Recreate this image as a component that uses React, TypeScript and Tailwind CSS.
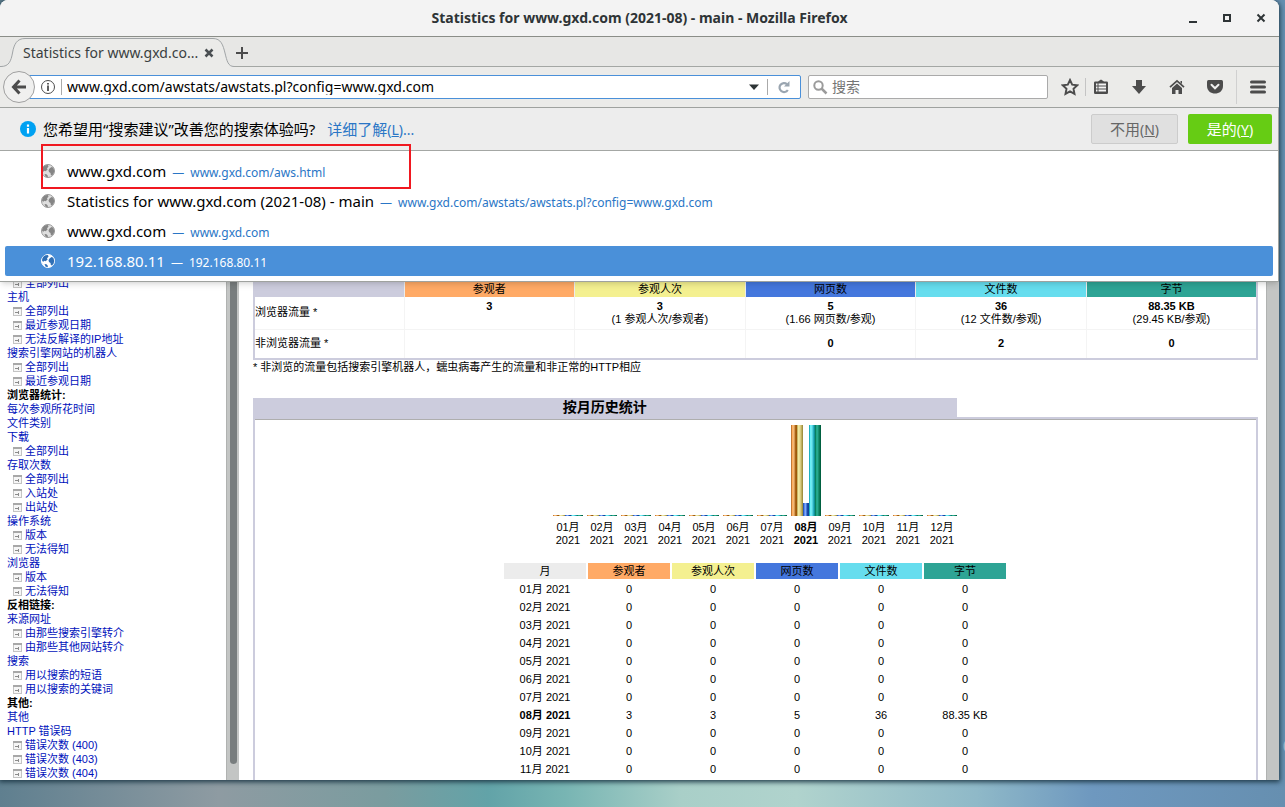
import { useState } from 'react';

const uiFont = "font-['Noto_Sans','Noto_Sans_CJK_SC',sans-serif]";
const pageFont = "font-['Liberation_Sans','Noto_Sans_CJK_SC',sans-serif]";

type NavItem = { label: string; kind: 'title' | 'link' | 'sub' };

const sub = (label: string): NavItem => ({ label, kind: 'sub' });
const link = (label: string): NavItem => ({ label, kind: 'link' });
const title = (label: string): NavItem => ({ label, kind: 'title' });

const navItems: NavItem[] = [
  sub('全部列出'),
  link('主机'),
  sub('全部列出'),
  sub('最近参观日期'),
  sub('无法反解译的IP地址'),
  link('搜索引擎网站的机器人'),
  sub('全部列出'),
  sub('最近参观日期'),
  title('浏览器统计:'),
  link('每次参观所花时间'),
  link('文件类别'),
  link('下载'),
  sub('全部列出'),
  link('存取次数'),
  sub('全部列出'),
  sub('入站处'),
  sub('出站处'),
  link('操作系统'),
  sub('版本'),
  sub('无法得知'),
  link('浏览器'),
  sub('版本'),
  sub('无法得知'),
  title('反相链接:'),
  link('来源网址'),
  sub('由那些搜索引擎转介'),
  sub('由那些其他网站转介'),
  link('搜索'),
  sub('用以搜索的短语'),
  sub('用以搜索的关键词'),
  title('其他:'),
  link('其他'),
  link('HTTP 错误码'),
  sub('错误次数 (400)'),
  sub('错误次数 (403)'),
  sub('错误次数 (404)'),
];

const suggestions = [
  { title: 'www.gxd.com', url: 'www.gxd.com/aws.html' },
  { title: 'Statistics for www.gxd.com (2021-08) - main', url: 'www.gxd.com/awstats/awstats.pl?config=www.gxd.com' },
  { title: 'www.gxd.com', url: 'www.gxd.com' },
  { title: '192.168.80.11', url: '192.168.80.11' },
];

const columns = [
  { label: '参观者', bg: 'bg-[#ffaa66]' },
  { label: '参观人次', bg: 'bg-[#f4f090]' },
  { label: '网页数', bg: 'bg-[#4477dd]' },
  { label: '文件数', bg: 'bg-[#66ddee]' },
  { label: '字节', bg: 'bg-[#2ea495]' },
];

const viewed = [
  ['3', ''],
  ['3', '(1 参观人次/参观者)'],
  ['5', '(1.66 网页数/参观)'],
  ['36', '(12 文件数/参观)'],
  ['88.35 KB', '(29.45 KB/参观)'],
];
const notViewed = ['', '', '0', '2', '0'];

const months = ['01月', '02月', '03月', '04月', '05月', '06月', '07月', '08月', '09月', '10月', '11月', '12月'];
const current = '08月';

// one colour per pixel column, left to right
const barShades = [
  ['#c47a34', '#ffb060', '#f0b878', '#d89850', '#a86418', '#a05808'],
  ['#c8b868', '#f0e8a0', '#e8e098', '#d8cc80', '#c0b060', '#a09040'],
  ['#2858b8', '#5888f0', '#80a8f8', '#4878d8', '#1848a8', '#104098'],
  ['#20b0c0', '#68f0f8', '#70e8f0', '#50d0e0', '#28b0c0', '#109098'],
  ['#088060', '#20a888', '#28a890', '#189070', '#087858', '#006040'],
];
const fullHeights = [91, 91, 13, 91, 91];

function MonthBars({ active }: { active: boolean }) {
  return (
    <svg width="30" height="91" shapeRendering="crispEdges" className="mx-auto block">
      {barShades.map((shades, bar) => {
        const h = active ? fullHeights[bar] : 1;
        return shades.map((color, i) => (
          <rect key={`${bar}-${i}`} x={bar * 6 + i} y={91 - h} width="1" height={h} fill={color} />
        ));
      })}
    </svg>
  );
}

function Globe({ selected }: { selected: boolean }) {
  const land = selected ? '#2f6fb5' : '#858585';
  return (
    <svg width="16" height="16" viewBox="0 0 16 16" className="shrink-0">
      <circle cx="8" cy="8" r="6.500" fill={selected ? '#ffffff' : '#dedede'} stroke={selected ? '#ffffff' : '#9a9a9a'} />
      <path
        d="M2 7.500C2 5 3.500 3 5.500 2.200L8 2l.5 1.800L7 5.200l.6 1.300-2 1.700L4 7.800 3.200 9zM9.500 5.500l2-1.500 1.800.8L14.300 8l-.8 2.800-1.500 1.700-1.200-.5-.3-2L9 9l-.5-1.800zM4.500 11l2 .3L8 13l-.5 1.200-2-.6z"
        fill={land}
      />
    </svg>
  );
}

function NavIcon() {
  return (
    <svg width="9" height="9" viewBox="0 0 9 9" shapeRendering="crispEdges" className="mr-[3px] ml-[6px] shrink-0">
      <path d="M.5 1v7.500h8V1" fill="#f6f6f6" stroke="#c4c4c4" />
      <path d="M0 1h9" stroke="#a8a8a8" strokeWidth="2" />
      <path d="M2 5.500h4M5.500 4v3" stroke="#8c8c8c" fill="none" />
    </svg>
  );
}

function TitleBar() {
  return (
    <header className="flex h-[37px] shrink-0 items-center border-b border-[#8b8e88] bg-[#f3f3f3]">
      <div className="w-[100px]" />
      <h1 className="flex-1 text-center text-sm font-bold text-[#2e3436]">
        Statistics for www.gxd.com (2021-08) - main - Mozilla Firefox
      </h1>
      <div className="flex w-[100px] items-center justify-end gap-[18px] pr-[10px] text-[#2e3436]">
        <button aria-label="Minimize" className="size-4">
          <svg width="16" height="16" className="block"><path d="M4 11h8v2H4z" fill="currentColor" /></svg>
        </button>
        <button aria-label="Maximize" className="size-4">
          <svg width="16" height="16" className="block"><path d="M5 5h6v6H5z" fill="none" stroke="currentColor" strokeWidth="2" /></svg>
        </button>
        <button aria-label="Close" className="size-4">
          <svg width="16" height="16" className="block"><path d="m4.500 4.500 7 7m0-7-7 7" stroke="currentColor" strokeWidth="2" /></svg>
        </button>
      </div>
    </header>
  );
}

function TabBar() {
  return (
    <div className="flex h-[30px] shrink-0 bg-[#e7e7e5]">
      <div className="grid w-[234px]">
        <svg width="234" height="30" className="col-start-1 row-start-1">
          <path
            d="M0 29.500h1C9 29.500 11 24 12.500 16 14 7 17 1.500 25 1.500h188C221 1.500 223 8 225 16s3 13.500 9 13.500V30H0z"
            fill="#ebebe9"
          />
          <path
            d="M0 29.500h1C9 29.500 11 24 12.500 16 14 7 17 1.500 25 1.500h188C221 1.500 223 8 225 16s3 13.500 9 13.500"
            fill="none"
            stroke="#a0a4a6"
          />
        </svg>
        <div className="col-start-1 row-start-1 flex items-center justify-between pr-[20px] pl-[23px] pt-[2px]">
          <span className="text-sm text-[#3a3f41]">Statistics for www.gxd.co...</span>
          <button aria-label="Close tab">
            <svg width="10" height="10" className="block"><path d="m1.500 1.500 7 7m0-7-7 7" stroke="#4a4f52" strokeWidth="2.500" /></svg>
          </button>
        </div>
      </div>
      <div className="flex flex-1 items-center border-b border-[#a4a7a4] pt-[2px]">
        <button aria-label="New tab">
          <svg width="16" height="16" className="block"><path d="M8 2v12M2 8h12" stroke="#4c4c4c" strokeWidth="2" /></svg>
        </button>
      </div>
    </div>
  );
}

function ToolBar() {
  const [address, setAddress] = useState('www.gxd.com/awstats/awstats.pl?config=www.gxd.com');
  const [query, setQuery] = useState('');

  return (
    <div className="flex h-[41px] shrink-0 items-center border-b border-[#a0a3a0] bg-[#ebebe9] pl-[3px]">
      <button aria-label="Back" className="z-10 flex size-8 shrink-0 items-center justify-center rounded-full border border-[#a0a0a0] bg-[#f0f0ef]">
        <svg width="16" height="16" viewBox="0 0 16 16">
          <path d="M8.500 1.500 2.500 8l6 6.500M3 8h12" fill="none" stroke="#4c4c4c" strokeWidth="3" />
        </svg>
      </button>
      <div className="-ml-[6px] flex h-6 flex-1 items-center rounded-r-xs border border-[#4a90d9] bg-white pl-[10px]">
        <svg width="16" height="16" viewBox="0 0 16 16" className="shrink-0">
          <circle cx="8" cy="8" r="6.500" fill="none" stroke="#4c4c4c" />
          <path d="M7.100 6.500h1.800V12H7.100zM7.100 4h1.800v1.600H7.100z" fill="#4c4c4c" />
        </svg>
        <input
          aria-label="Address"
          value={address}
          onChange={(e) => setAddress(e.target.value)}
          className="ml-[5px] h-4 min-w-0 flex-1 border-l border-[#aaaaaa] pl-[5px] text-sm text-black outline-none"
        />
        <button aria-label="Show history" className="px-[8px]">
          <svg width="10" height="6" className="block"><path d="M0 .5h10L5 6z" fill="#2e3436" /></svg>
        </button>
        <button aria-label="Reload" className="border-l border-[#aaaaaa] px-[9px]">
          <svg width="14" height="16" viewBox="0 0 14 16" className="block">
            <path d="M10 5.200A4.500 4.500 0 1 0 10.800 11" fill="none" stroke="#9aa5b0" strokeWidth="2.200" />
            <path d="M12.500 2v5.500H7z" fill="#9aa5b0" />
          </svg>
        </button>
      </div>
      <div className="ml-[7px] flex h-6 w-[240px] items-center rounded-xs border border-[#aaaaaa] bg-white pl-[3px]">
        <svg width="16" height="16" viewBox="0 0 16 16">
          <circle cx="6.500" cy="6.500" r="4.200" fill="none" stroke="#9b9b9b" strokeWidth="2" />
          <path d="m9.500 9.500 5 5" stroke="#9b9b9b" strokeWidth="2.500" />
        </svg>
        <input
          aria-label="搜索"
          placeholder="搜索"
          value={query}
          onChange={(e) => setQuery(e.target.value)}
          className="ml-1 min-w-0 flex-1 text-sm outline-none placeholder:text-[#757575]"
        />
      </div>
      <div className="flex items-center pl-[13px] text-[#4c4c4c]">
        <button aria-label="Bookmark">
          <svg width="18" height="18" viewBox="0 0 18 18">
            <path d="m9 2 2.200 4.700 5 .6-3.700 3.500 1 5.100L9 13.400l-4.500 2.500 1-5.100L1.800 7.300l5-.6z" fill="none" stroke="currentColor" strokeWidth="1.900" />
          </svg>
        </button>
        <span className="ml-[6px] h-[18px] w-px bg-[#c4c4c4]" />
        <button aria-label="Bookmarks list" className="ml-[7px]">
          <svg width="16" height="16" viewBox="0 0 16 16">
            <path d="M5 2.500 8 .5l3 2h2.700q1.300 0 1.300 1.300v9.900q0 1.300-1.300 1.300H2.300Q1 15 1 13.700V3.800q0-1.300 1.300-1.300z" fill="currentColor" />
            <path d="M3 5.500h1.500M5.500 5.500H13M3 8.500h1.500M5.500 8.500H13M3 11.500h1.500M5.500 11.500H13" stroke="#f4f4f4" strokeWidth="1.800" />
          </svg>
        </button>
        <button aria-label="Downloads" className="ml-[22px]">
          <svg width="16" height="16" viewBox="0 0 16 16"><path d="M5 1h6v6h4l-7 8-7-8h4z" fill="currentColor" /></svg>
        </button>
        <button aria-label="Home" className="ml-[22px]">
          <svg width="16" height="16" viewBox="0 0 16 16">
            <path d="M1 8.200 8 1.800l7 6.400" fill="none" stroke="currentColor" strokeWidth="1.700" />
            <path d="M8 4.500 13 9v6H9.500v-4h-3v4H3V9zM11.500 2H13v3l-1.500-1.300z" fill="currentColor" />
          </svg>
        </button>
        <button aria-label="Pocket" className="ml-[22px]">
          <svg width="16" height="16" viewBox="0 0 16 16">
            <path d="M1.500 1h13Q16 1 16 2.500V7c0 10-16 10-16 0V2.500Q0 1 1.500 1z" fill="currentColor" />
            <path d="m4.500 5.800 3.500 3.500 3.500-3.500" fill="none" stroke="#f0f0f0" strokeWidth="2" strokeLinecap="round" />
          </svg>
        </button>
        <span className="ml-[13px] h-[34px] w-px bg-[#d0d0d0]" />
        <button aria-label="Menu" className="mr-[13px] ml-[13px]">
          <svg width="16" height="16" viewBox="0 0 16 16">
            <path d="M1.500 3h13M1.500 8h13M1.500 13h13" stroke="currentColor" strokeWidth="3" strokeLinecap="round" />
          </svg>
        </button>
      </div>
    </div>
  );
}

function AddressPopup() {
  const [selected, setSelected] = useState(3);

  return (
    <section className="relative z-10 shrink-0 border-r border-b border-[#9fa29f] bg-white shadow-md">
      <div className="flex h-[43px] items-center border-b border-[#a4a7a4] bg-[#ededed] pr-[6px] pl-5">
        <svg width="16" height="16" viewBox="0 0 16 16">
          <circle cx="8" cy="8" r="8" fill="#00a1f2" />
          <path d="M6.900 7h2.200v5.500H6.900zM6.900 3.500h2.200v2.200H6.900z" fill="#fff" />
        </svg>
        <p className="ml-[7px] text-[15px] leading-5 text-black">您希望用“搜索建议”改善您的搜索体验吗?</p>
        <a href="#more" className="ml-3 text-[15px] leading-5 text-[#2a76c6]">
          详细了解<span className="text-sm">(<u>L</u>)...</span>
        </a>
        <button className="ml-auto h-[30px] w-[87px] rounded-xs border border-[#cccccc] bg-[#e0e0e0] text-[15px] leading-5 text-[#666666]">
          不用<span className="text-sm">(<u>N</u>)</span>
        </button>
        <button className="ml-[10px] h-[30px] w-[84px] rounded-xs bg-[#66cc14] text-[15px] leading-5 text-white">
          是的<span className="text-sm">(<u>Y</u>)</span>
        </button>
      </div>
      <ul className="p-[5px]">
        {suggestions.map((s, i) => (
          <li
            key={i}
            onMouseEnter={() => setSelected(i)}
            className={`flex h-[30px] items-center rounded-xs pl-[35px] ${i === selected ? 'bg-[#4a90d9] text-white' : 'text-black'}`}
          >
            <Globe selected={i === selected} />
            <span className="ml-[11px] text-[15px] leading-5">{s.title}</span>
            <span className={`ml-[6px] pt-[3px] text-xs ${i === selected ? '' : 'text-[#2a76c6]'}`}>
              —<span className="ml-[6px]">{s.url}</span>
            </span>
          </li>
        ))}
      </ul>
      <div className="pointer-events-none absolute top-[36px] left-[41px] h-[45px] w-[370px] border-2 border-[#f01820]" />
    </section>
  );
}

function Sidebar() {
  return (
    <nav className="-mt-[6px] w-[226px] shrink-0 pl-[7px] text-[11px] leading-[14px]">
      <ul>
        {navItems.map((item, i) => (
          <li key={i} className="flex h-[14px] items-center whitespace-nowrap">
            {item.kind === 'sub' && <NavIcon />}
            {item.kind === 'title' ? (
              <b className="text-black">{item.label}</b>
            ) : (
              <a href="#section" className="text-[#0011bb]">{item.label}</a>
            )}
          </li>
        ))}
      </ul>
    </nav>
  );
}

function Summary() {
  return (
    <table className="w-full table-fixed border-2 border-t-0 border-[#ccccdd] text-center leading-[13px]">
      <thead>
        <tr className="h-[15px]">
          <th className="w-[150px] border-r border-[#ececec] bg-[#ccccdd]" />
          {columns.map((c) => (
            <th key={c.label} className={`border-r border-[#ececec] font-normal ${c.bg}`}>{c.label}</th>
          ))}
        </tr>
      </thead>
      <tbody>
        <tr className="h-[32px]">
          <td className="border-r border-b border-[#f4f4f4] text-left">浏览器流量 *</td>
          {viewed.map(([value, note], i) => (
            <td key={i} className="border-r border-b border-[#f4f4f4]">
              <b className="block">{value}</b>
              <span className="block h-[13px]">{note}</span>
            </td>
          ))}
        </tr>
        <tr className="h-[30px]">
          <td className="border-r border-[#f4f4f4] text-left">非浏览器流量 *</td>
          {notViewed.map((value, i) => (
            <td key={i} className="border-r border-[#f4f4f4] font-bold">{value}</td>
          ))}
        </tr>
      </tbody>
    </table>
  );
}

function MonthlyHistory() {
  return (
    <section className="flex flex-1 flex-col">
      <h2 className="h-[19px] w-[70%] bg-[#ccccdd] text-center text-sm leading-[19px] font-bold">按月历史统计</h2>
      <div className="flex-1 border-2 border-b-0 border-[#ccccdd]">
        <div className="border-t border-[#aeaeae] pt-[5px] pr-px">
          <div className="flex justify-center">
            {months.map((m) => (
              <div key={m} className={`w-[34px] text-center leading-[13px] ${m === current ? 'font-bold' : ''}`}>
                <MonthBars active={m === current} />
                <p className="pt-[5px]">{m}<br />2021</p>
              </div>
            ))}
          </div>
          <table className="mx-auto mt-[14px] w-[506px] table-fixed border-separate border-spacing-[2px] text-center leading-4">
            <thead>
              <tr>
                <th className="bg-[#ececec] p-0 font-normal">月</th>
                {columns.map((c) => (
                  <th key={c.label} className={`p-0 font-normal ${c.bg}`}>{c.label}</th>
                ))}
              </tr>
            </thead>
            <tbody>
              {months.slice(0, 11).map((m) => (
                <tr key={m}>
                  <td className={`p-0 ${m === current ? 'font-bold' : ''}`}>{m} 2021</td>
                  {columns.map((c, i) => (
                    <td key={c.label} className="p-0">{m === current ? viewed[i][0] : '0'}</td>
                  ))}
                </tr>
              ))}
            </tbody>
          </table>
        </div>
      </div>
    </section>
  );
}

export default function App() {
  return (
    <div className="relative h-screen overflow-hidden bg-[linear-gradient(to_right,#5f7f8f,#8e9ba2_17%,#7a9c9f_30%,#62a3a8_38%,#78b5b3_44%,#a9cfc8_53%,#b0d3cd_62%,#8fb9c8_76%,#6e98bf_85%,#668fb0)] pr-[6px] pb-[27px]">
      <span className={`absolute right-[-10px] bottom-[47px] text-xl text-white/40 ${uiFont}`}>C</span>
      <div className={`relative flex h-full flex-col overflow-hidden rounded-t-lg bg-white shadow-[0_1px_5px_1px_#1f3a48] ${uiFont}`}>
        <TitleBar />
        <TabBar />
        <ToolBar />
        <AddressPopup />
        <div className={`flex min-h-0 flex-1 overflow-hidden text-[11px] text-black ${pageFont}`}>
          <Sidebar />
          <div className="w-[13px] shrink-0 border-l border-[#b0b2b1] bg-[#c3c5c4] pr-[2px] pl-[3px] pb-4">
            <div className="h-full rounded-b-full bg-[#787d7e]" />
          </div>
          <main className="flex min-w-0 flex-1 flex-col pr-2 pl-[14px]">
            <Summary />
            <p className="mb-[23px] leading-[15px]">* 非浏览的流量包括搜索引擎机器人，蠕虫病毒产生的流量和非正常的HTTP相应</p>
            <MonthlyHistory />
          </main>
          <div className="w-[13px] shrink-0 border-l border-[#b0b2b1] bg-[#c3c5c4]" />
        </div>
      </div>
    </div>
  );
}
